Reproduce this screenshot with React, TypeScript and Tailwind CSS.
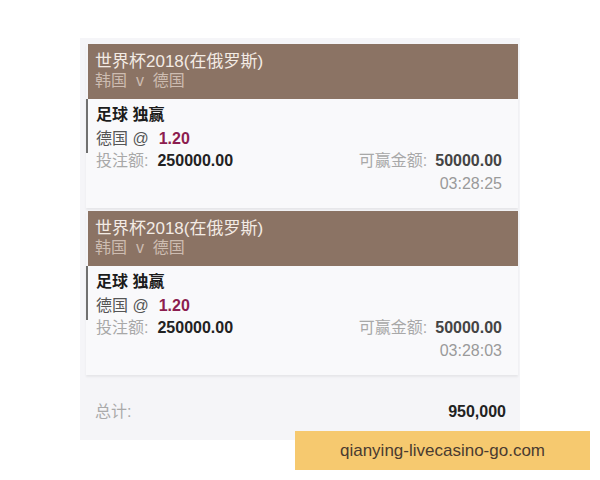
const BETS = [
  { time: "03:28:25" },
  { time: "03:28:03" },
];

const font = { fontFamily: '"Liberation Sans", "Noto Sans CJK SC", sans-serif' };

function BetCard({ time }: { time: string }) {
  return (
    <div className="w-[432px] shadow-[0_2px_2px_rgba(0,0,0,0.06)]">
      <div className="ml-[2px] h-[55px] bg-[#8b7364] px-[7px] pt-[8px]">
        <div className="text-[17px] leading-[20px] text-[#f3ebe4]">世界杯2018(在俄罗斯)</div>
        <div className="text-[16px] leading-[18px] text-[#cdbcb1]">韩国 &nbsp;v&nbsp; 德国</div>
      </div>
      <div className="relative h-[109px] bg-[#f9f9fb] pl-[10px] pr-[16px] pt-[6px]">
        <div className="absolute left-0 top-0 h-[54px] w-[2px] bg-[#707070]" />
        <div className="text-[16px] leading-[20px] font-bold text-[#1c1c1c]">足球 独赢</div>
        <div className="mt-[4px] flex items-center gap-[10px] text-[16px] leading-[20px] text-[#555]">
          <span>德国 @</span>
          <span className="font-bold text-[#8c1d4f]">1.20</span>
        </div>
        <div className="mt-[2px] flex justify-between text-[16px] leading-[20px]">
          <div>
            <span className="text-[#a8a8a8]">投注额:</span>
            <span className="ml-[9px] font-bold text-[#222]">250000.00</span>
          </div>
          <div>
            <span className="text-[#a8a8a8]">可赢金额:</span>
            <span className="ml-[8px] font-bold text-[#444]">50000.00</span>
          </div>
        </div>
        <div className="mt-[3px] text-right text-[16px] leading-[20px] text-[#9a9a9a]">{time}</div>
      </div>
    </div>
  );
}

export default function App() {
  return (
    <div className="relative h-[480px] w-[600px] bg-white" style={font}>
      <div className="ml-[80px] pt-[38px]">
        <div className="h-[402px] w-[440px] bg-[#f5f5f8] pl-[6px] pt-[6px]">
          <div className="flex flex-col gap-[3px]">
            {BETS.map((b) => (
              <BetCard key={b.time} time={b.time} />
            ))}
          </div>
          <div className="mt-[27px] flex justify-between pl-[9px] pr-[14px] text-[16px] leading-[20px]">
            <span className="text-[#aaa]">总计:</span>
            <span className="font-bold text-[#222]">950,000</span>
          </div>
        </div>
      </div>
      <div className="absolute left-[295px] top-[431px] flex h-[39px] w-[295px] items-center justify-center bg-[#f6c96f] text-[17px] text-[#4a3b30]">
        qianying-livecasino-go.com
      </div>
    </div>
  );
}
